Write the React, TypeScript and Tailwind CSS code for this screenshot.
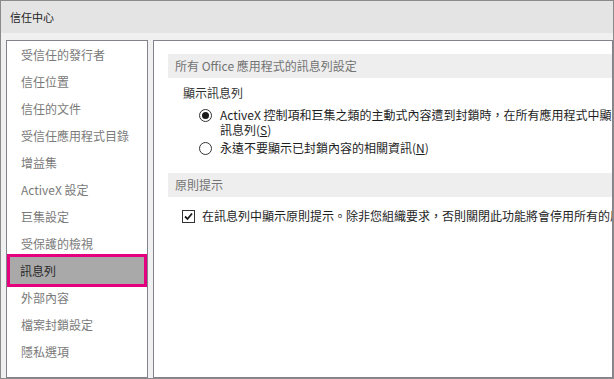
import React from 'react'

const navItems = [
  '受信任的發行者',
  '信任位置',
  '信任的文件',
  '受信任應用程式目錄',
  '增益集',
  'ActiveX 設定',
  '巨集設定',
  '受保護的檢視',
  '訊息列',
  '外部內容',
  '檔案封鎖設定',
  '隱私選項',
]

const SELECTED = '訊息列'

function SectionHeader({ children }: { children: React.ReactNode }) {
  return (
    <div className="ml-[14px] h-[24px] bg-[#eeeeee] pl-[7px] flex items-center text-[12px] text-[#737373] whitespace-nowrap">
      {children}
    </div>
  )
}

function Radio({ checked }: { checked?: boolean }) {
  return (
    <span className="w-[13px] h-[13px] rounded-full border border-[#333333] bg-white flex items-center justify-center shrink-0">
      {checked && <span className="w-[7px] h-[7px] rounded-full bg-[#1a1a1a]" />}
    </span>
  )
}

function Checkbox() {
  return (
    <span className="w-[13px] h-[13px] border border-[#333333] bg-white flex items-center justify-center shrink-0">
      <svg width="9" height="9" viewBox="0 0 9 9">
        <path d="M1 4.5 L3.5 7 L8 1.5" fill="none" stroke="#1a1a1a" strokeWidth="1.8" />
      </svg>
    </span>
  )
}

export default function App() {
  return (
    <div className="w-[614px] h-[379px] border border-[#8a8a8a] bg-[#f0f0f0] flex flex-col overflow-hidden font-['Noto_Sans_CJK_TC',sans-serif]">
      {/* 標題列 */}
      <div className="h-[32px] shrink-0 bg-[#e4e4e4] pl-[9px] flex items-center text-[11px] text-[#1e1e1e]">
        信任中心
      </div>

      <div className="flex-1 min-h-0 flex pt-[7px] pl-[5px] gap-[5px]">
        {/* 左側選單 */}
        <div className="w-[142px] shrink-0 h-full bg-white border border-[#82838c]">
          {navItems.map((item) =>
            item === SELECTED ? (
              <div
                key={item}
                className="h-[33px] -my-[3px] border-[3px] border-[#e5007d] bg-[#a9a9a9] pl-[10px] flex items-center text-[12px] text-[#2a2a2a]"
              >
                {item}
              </div>
            ) : (
              <div key={item} className="h-[27px] pl-[14px] flex items-center text-[12px] text-[#7a7a7a] whitespace-nowrap">
                {item}
              </div>
            )
          )}
        </div>

        {/* 右側內容 */}
        <div className="w-[460px] shrink-0 h-full bg-white border border-[#82838c] pt-[13px] overflow-hidden">
          <SectionHeader>所有 Office 應用程式的訊息列設定</SectionHeader>

          <div className="pl-[29px] pt-[6px] text-[12px] text-[#333333]">顯示訊息列</div>

          <div className="pl-[45px] pt-[6px] flex items-start gap-[8px] text-[12px] text-[#1e1e1e]">
            <span className="h-[15px] flex items-center"><Radio checked /></span>
            <div className="whitespace-nowrap">
              <div className="h-[14px] leading-[14px]">
                ActiveX 控制項和巨集之類的主動式內容遭到封鎖時，在所有應用程式中顯示
              </div>
              <div className="h-[15px] leading-[15px]">
                訊息列(<span className="underline">S</span>)
              </div>
            </div>
          </div>

          <div className="pl-[45px] pt-[2px] flex items-center gap-[8px] text-[12px] text-[#1e1e1e] whitespace-nowrap">
            <Radio />
            <span>永遠不要顯示已封鎖內容的相關資訊(<span className="underline">N</span>)</span>
          </div>

          <div className="pt-[16px]">
            <SectionHeader>原則提示</SectionHeader>
          </div>

          <div className="pl-[28px] pt-[10px] flex items-center gap-[7px] text-[12px] text-[#1e1e1e] whitespace-nowrap">
            <Checkbox />
            <span>在訊息列中顯示原則提示。除非您組織要求，否則關閉此功能將會停用所有的原則提示。</span>
          </div>
        </div>
      </div>
    </div>
  )
}
